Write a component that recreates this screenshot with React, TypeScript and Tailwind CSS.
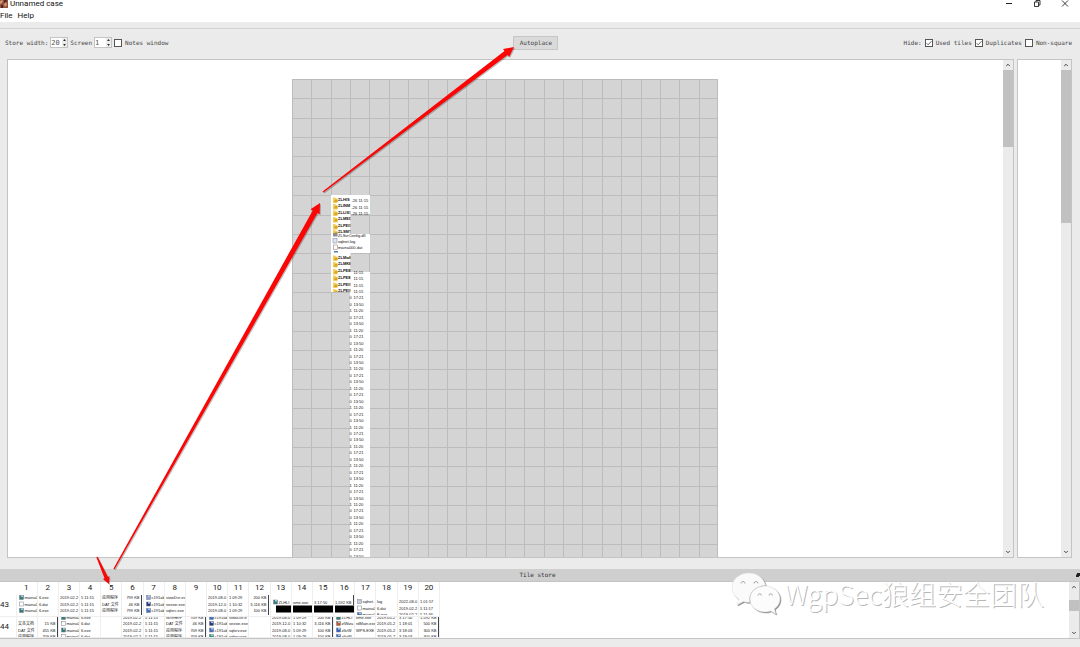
import React from "react";
import { ChevronDown, ChevronUp } from "lucide-react";

const UI_FONT = "font-['Roboto','Noto_Sans',sans-serif]";
const MONO_FONT = "font-['DejaVu_Sans_Mono','Liberation_Mono',monospace]";
const TILE_FONT = "'Liberation Sans', 'Noto Sans CJK SC', sans-serif";

function Spin({ id, value }: { id: string; value: string }) {
  return (
    <span className="flex h-[11px] w-[18px] items-stretch border border-[#c4c4c4] bg-white">
      <input
        id={id}
        type="text"
        defaultValue={value}
        className="w-0 min-w-0 flex-1 bg-transparent text-[7px] leading-none text-[#555] outline-none"
      />
      <span className="flex w-[5px] flex-col bg-[#ececec]">
        <button aria-label="Increase" className="flex flex-1 items-center justify-center">
          <svg viewBox="0 0 4 3" className="h-[2px] w-[3px]">
            <path d="M0 3 2 0 4 3Z" fill="#222" />
          </svg>
        </button>
        <button aria-label="Decrease" className="flex flex-1 items-center justify-center">
          <svg viewBox="0 0 4 3" className="h-[2px] w-[3px]">
            <path d="M0 0 2 3 4 0Z" fill="#222" />
          </svg>
        </button>
      </span>
    </span>
  );
}

function Check({ label, checked = false }: { label: string; checked?: boolean }) {
  return (
    <label className="flex items-center gap-[3px]">
      <span className="grid size-2 place-items-center">
        <input
          type="checkbox"
          defaultChecked={checked}
          className="peer col-start-1 row-start-1 size-2 appearance-none border border-[#555] bg-white"
        />
        <svg
          viewBox="0 0 8 8"
          className="pointer-events-none invisible col-start-1 row-start-1 size-2 peer-checked:visible"
        >
          <path d="M1.6 4.2 3.2 5.8 6.5 2.2" fill="none" stroke="#444" strokeWidth="0.8" />
        </svg>
      </span>
      {label}
    </label>
  );
}

function ScrollBar({ before, thumb }: { before?: string; thumb: string }) {
  return (
    <div className="flex w-[10px] shrink-0 flex-col bg-[#ebebeb]">
      <button aria-label="Scroll up" className="flex h-[10px] shrink-0 items-center justify-center">
        <ChevronUp className="size-[6px] text-[#444]" strokeWidth={4} />
      </button>
      {before && <div className={before} />}
      <div className={"bg-[#c1c1c1] " + thumb} />
      <div className="flex-1" />
      <button aria-label="Scroll down" className="flex h-[10px] shrink-0 items-center justify-center">
        <ChevronDown className="size-[6px] text-[#444]" strokeWidth={4} />
      </button>
    </div>
  );
}

const CELL = 426 / 22;
const TIMES = ["17:21", "13:50", "11:20"];
const FOLDERS: [number, string][] = [
  [120.5, "ZLHIS"],
  [127, "ZLINM"],
  [133.5, "ZLLIS1"],
  [140, "ZLMED"],
  [147, "ZLPEIS"],
  [153, "ZLSMT"],
  [178.5, "ZLMwB"],
  [185, "ZLMKB"],
  [192, "ZLPEB"],
  [198.5, "ZLPEB"],
  [205.5, "ZLPEIS"],
  [212, "ZLPEIS"],
];

function Folder({ x, y }: { x: number; y: number }) {
  return (
    <g>
      <path d={`M${x} ${y - 2}h2l1 1h1.5v4.5h-4.5Z`} fill="#f3cf5a" />
      <path d={`M${x + 2} ${y}h2.5v2.5h-3.5Z`} fill="#d9a520" />
    </g>
  );
}

function Workspace() {
  const lines = Array.from({ length: 30 }, (_, i) => i);
  const rows = Array.from({ length: 45 }, (_, i) => i);
  return (
    <svg width="426" height="560" viewBox="0 0 426 560" className="shrink-0">
      <rect width="426" height="560" fill="#d4d4d4" />
      <g stroke="#bcbcbc" strokeWidth="1">
        {lines.slice(0, 23).map((i) => (
          <line
            key={"v" + i}
            x1={Math.min(Math.round(i * CELL) + 0.5, 425.5)}
            x2={Math.min(Math.round(i * CELL) + 0.5, 425.5)}
            y1="0"
            y2="560"
          />
        ))}
        {lines.map((i) => (
          <line key={"h" + i} x1="0" x2="426" y1={Math.round(i * CELL) + 0.5} y2={Math.round(i * CELL) + 0.5} />
        ))}
      </g>
      <g fill="#fff">
        <rect x="39" y="116" width="19.5" height="97" />
        <rect x="58" y="116" width="20" height="19" />
        <rect x="58" y="155" width="20" height="19" />
        <rect x="58" y="193" width="20" height="367" />
      </g>
      <g fontFamily={TILE_FONT} fontSize="4" fill="#111">
        <svg x="39" y="116" width="19.5" height="97" viewBox="39 116 19.5 97">
          {FOLDERS.map(([y, name]) => (
            <g key={y}>
              <Folder x={41} y={y} />
              <text x="46" y={y + 1.4} fontWeight="bold">
                {name}
              </text>
            </g>
          ))}
        </svg>
        <rect x="39" y="154.500" width="19" height="3" fill="#fff" />
        <rect x="41" y="154" width="4.5" height="3.5" fill="#8b8d91" />
        <text x="46" y="157.6">ZLSvrConfig.dll</text>
        <rect x="41" y="159.5" width="4" height="4.5" fill="#dfe4ee" stroke="#8a93a8" strokeWidth="0.6" />
        <text x="46" y="163.6">sqlnet.log</text>
        <rect x="41.3" y="166" width="4" height="4.5" fill="#fff" stroke="#a88" strokeWidth="0.6" />
        <text x="46" y="170.2">maina000.dat</text>
        <rect x="42" y="172" width="4" height="1.5" fill="#4a80b8" />
        <text x="59.5" y="123">-26 11:15</text>
        <text x="59.5" y="129.8">-26 11:15</text>
        <text x="59.5" y="135.5">-26 11:15</text>
        {rows.map((i) => {
          const y = 194.6 + i * (CELL / 3);
          return (
            <g key={i}>
              {i > 3 && <text x="57.5" y={y}>{i % 3 ? "0" : "1"}</text>}
              <text x="61.5" y={y}>{i < 4 ? "11:15" : TIMES[(i - 4) % 3]}</text>
            </g>
          );
        })}
      </g>
    </svg>
  );
}

type Tile = {
  lines: string[];
  icons?: string[];
  bar?: boolean;
  right?: boolean;
  redact?: [number, number];
};

const t = (...lines: string[]): Tile => ({ lines });
const size = (...lines: string[]): Tile => ({ lines, bar: true, right: true });
const ic = (icons: string[], ...lines: string[]): Tile => ({ icons, lines });

const G = "#2f7d78";
const W = "#ffffff";
const N = "#27337a";
const B = "#3c6fc4";

const ROWS: { id: number; ys: number[]; tiles: Tile[] }[] = [
  {
    id: 43,
    ys: [4, 10.5, 17],
    tiles: [
      ic([G, W, G], "maina0", "maina0", "maina0"),
      t("6.exe", "6.dat", "6.exe"),
      t("2019-02-2", "2019-02-2", "2019-02-2"),
      t("5 11:15", "5 11:15", "5 11:15"),
      t("应用程序", "DAT 文件", "应用程序"),
      size("799 KB", "46 KB", "799 KB"),
      ic(["#8aa0d8", N, B], "c191ab", "c191ab", "c191ab"),
      t("viewDvr-ex", "sexsie.exe", "sqlsrc.exe"),
      t(),
      t("2019-08-0", "2019-12-0", "2019-08-0"),
      t("1 09:29", "1 10:32", "1 09:29"),
      size("200 KB", "3,116 KB", "100 KB"),
      { icons: ["", G], lines: ["", "ZLHLI"], redact: [5, 20] },
      { lines: ["", "ome.exe"], redact: [1, 20] },
      { lines: ["", "3 17:50"], redact: [1, 20] },
      { lines: ["", "1,592 KB"], redact: [1, 20], right: true, bar: true },
      ic(["", "#c9cfe0", W, B], "", "sqlnet.", "maina0", "maina0"),
      t("", "log", "6.dat", "E.exe"),
      t("", "2022-08-0", "2019-02-2", "2019-02-2"),
      t("", "1 01:57", "5 11:17", "5 11:36"),
    ],
  },
  {
    id: 44,
    ys: [2, 8, 14.5, 21],
    tiles: [
      t("", "文本文档", "DAT 文件", "应用程序"),
      size("", "15 KB", "455 KB", "709 KB"),
      ic([G, W, G, W], "maina0", "maina0", "maina0", "maina0"),
      t("6.exe", "6.dat", "6.exe", "6.dat"),
      t(),
      t("2019-02-2", "2019-02-2", "2019-02-2", "2019-02-2"),
      t("5 11:15", "5 11:15", "5 11:15", "5 11:15"),
      t("应用程序", "DAT 文件", "应用程序", "应用程序"),
      size("709 KB", "46 KB", "709 KB", "709 KB"),
      ic([B, N, B, "#159a62"], "c191ab", "c191ab", "c191ab", "c191ab"),
      t("viewDvr-e", "sexsie.exe", "sqlsrv.exe", "sqlsrv.exe"),
      t(),
      t("2019-08-0", "2019-12-0", "2019-08-0", "2019-08-0"),
      t("1 09:29", "1 10:32", "5 09:29", "1 09:29"),
      size("200 KB", "3,116 KB", "100 KB", "100 KB"),
      ic([G, "#c0562b", "#2b62c9", B], "ZLHLI", "zlWiza", "zlkrW", "zlkrW"),
      t("ome.exe", "rdMain.exe", "WPS.EXE", ""),
      t("2019-05-2", "2019-05-2", "2019-05-2", "2019-05-2"),
      t("3 17:50", "1 18:01", "3 18:03", "3 18:03"),
      size("1,592 KB", "500 KB", "300 KB", "300 KB"),
    ],
  },
];

function TileView({ tile, ys }: { tile: Tile; ys: number[] }) {
  const list = tile.redact ? [-9, 8.5] : tile.lines.length === 4 && ys.length === 3 ? [0, 8, 14.5, 21] : ys;
  return (
    <svg viewBox="0 0 20 20" width="20" height="20" className="block">
      <g fontFamily={TILE_FONT} fontSize="4" fill="#222">
        {tile.lines.map((line, i) => (
          <text key={i} x={tile.right ? 17.5 : tile.icons ? 7.5 : 1} y={list[i]} textAnchor={tile.right ? "end" : "start"}>
            {line}
          </text>
        ))}
      </g>
      {tile.icons?.map(
        (c, i) =>
          c && (
            <g key={i}>
              <rect x="2.5" y={list[i] - 3.5} width="4" height="4" fill={c} stroke="#777b88" strokeWidth="0.5" />
              {c !== W && <rect x="4" y={list[i] - 3.5} width="2" height="1.6" fill="#a9c4e0" />}
            </g>
          ),
      )}
      {tile.redact && (
        <rect x={tile.redact[0]} y="10.5" width={tile.redact[1] - tile.redact[0]} height="7" fill="#000" />
      )}
      {tile.bar && <rect x="19" y="0" width="1" height={tile.redact ? 10 : 20} fill="#444" />}
    </svg>
  );
}

function TileTable() {
  return (
    <table className="w-[440px] table-fixed border-collapse self-start text-[8px] leading-none text-[#222]">
      <thead>
        <tr className="h-[13px]">
          <th className="w-4 p-0" aria-label="Row" />
          {Array.from({ length: 20 }, (_, i) => (
            <th key={i} className="border-r border-[#eeeeee] p-0 pb-[2px] text-center font-normal">
              {i + 1}
            </th>
          ))}
        </tr>
      </thead>
      <tbody>
        {ROWS.map((row) => (
          <tr key={row.id} className="h-[21px]">
            <th className="border-r border-b border-[#eeeeee] p-0 text-left font-normal">{row.id}</th>
            {row.tiles.map((tile, i) => (
              <td key={i} className="overflow-hidden border-r border-b border-[#eeeeee] p-0">
                <TileView tile={tile} ys={row.ys} />
              </td>
            ))}
          </tr>
        ))}
      </tbody>
    </table>
  );
}

// Tapered arrow: thin at the tail, widening towards a triangular head.
function arrow(x1: number, y1: number, x2: number, y2: number, w: number, head: number, hw: number) {
  const len = Math.hypot(x2 - x1, y2 - y1);
  const ux = (x2 - x1) / len;
  const uy = (y2 - y1) / len;
  const bx = x2 - ux * head;
  const by = y2 - uy * head;
  const p = (x: number, y: number, d: number) => `${x - uy * d},${y + ux * d}`;
  return [p(x1, y1, 0.7), p(bx, by, w), p(bx, by, hw), `${x2},${y2}`, p(bx, by, -hw), p(bx, by, -w), p(x1, y1, -0.7)].join(" ");
}

function Annotations() {
  return (
    <svg width="1080" height="647" className="pointer-events-none absolute top-0 left-0 drop-shadow-[1px_1px_0px_rgba(0,0,0,0.25)]">
      <g fill="#fb0505">
        <polygon points={arrow(323, 192, 514, 47, 2.5, 10, 5)} />
        <polygon points={arrow(114, 569, 320, 203, 2.7, 10, 5.2)} />
        <polygon points={arrow(97, 557, 109, 584, 1.8, 7, 3.5)} />
      </g>
    </svg>
  );
}

function Watermark() {
  return (
    <div className="pointer-events-none absolute right-[36px] bottom-[31px] flex items-center gap-1">
      <svg width="50" height="44" viewBox="0 0 50 44" className="drop-shadow-[1px_1px_0px_rgba(0,0,0,0.45)]">
        <path
          d="M18 1C8.500 1 1 7.300 1 15.500c0 5 2.600 9 6.800 11.700L6 33l6.500-3.500c2 .7 4 .9 6.200.8C17 21 24 14 34.500 13.500 33 6 26.500 1 18 1Z"
          fill="#fafafa"
          stroke="#dedede"
          strokeWidth="0.5"
        />
        <path
          d="M34 14c-8.500 0-15 5.700-15 13s6.500 13 15 13c2 0 3.900-.4 5.700-1l5 3-1.400-5c3.500-2.500 5.700-6 5.700-10 0-7.300-6.500-13-15-13Z"
          fill="#fcfcfc"
          stroke="#d8d8d8"
          strokeWidth="0.5"
        />
        <g fill="none" stroke="#a9a9a9" strokeWidth="1">
          <path d="M10 11.500a2 2 0 0 1 4 0M23 11.500a2 2 0 0 1 4 0M27 23.500a1.700 1.700 0 0 1 3.400 0M38 23.500a1.700 1.700 0 0 1 3.400 0" />
        </g>
      </svg>
      <span className="font-['Noto_Sans_CJK_SC',sans-serif] text-[27px] leading-8 font-light text-white [text-shadow:1px_1px_0px_#b8b8b8]">
        WgpSec狼组安全团队
      </span>
    </div>
  );
}

export default function App() {
  return (
    <div className={`relative flex h-screen flex-col overflow-hidden bg-[#ebebeb] text-[8px] leading-none text-[#111] ${UI_FONT}`}>
      <header className="flex h-[10px] shrink-0 items-start justify-between bg-white">
        <div className="flex items-center gap-[2px]">
          <svg width="8" height="8" viewBox="0 0 8 8">
            <rect width="8" height="8" fill="#94533c" />
            <path d="M0 1 3 0 2 3 0 4ZM4 4l2-2 1 3-2 2Z" fill="#d59a76" />
            <path d="M4 0h3L6 2 4 3ZM1 5l2 0v3H1Z" fill="#4c2a22" />
          </svg>
          <h1>Unnamed case</h1>
        </div>
        <div className="flex gap-5 pr-[11px]">
          <button aria-label="Minimize">
            <svg width="8" height="8" viewBox="0 0 8 8">
              <path d="M1 3.500h6" stroke="#222" />
            </svg>
          </button>
          <button aria-label="Restore">
            <svg width="8" height="8" viewBox="0 0 8 8" fill="none" stroke="#222" strokeWidth="0.9">
              <path d="M1.500 2h4v4.500h-4ZM3 2V.5h4V5H5.500" />
            </svg>
          </button>
          <button aria-label="Close">
            <svg width="8" height="8" viewBox="0 0 8 8">
              <path d="M1 .5l6 6M7 .5l-6 6" stroke="#222" strokeWidth="0.9" />
            </svg>
          </button>
        </div>
      </header>
      <nav className="flex h-3 shrink-0 items-center gap-[5px] bg-white">
        <button>File</button>
        <button>Help</button>
      </nav>
      <div className="h-[7px] shrink-0 border-b border-[#d2d2d2]" />

      <div className={`flex h-[30px] shrink-0 items-center justify-between pr-2 pb-[3px] pl-[5px] text-[6px] text-[#444] ${MONO_FONT}`}>
        <div className="flex items-center gap-[2px]">
          <label htmlFor="store-width">Store width:</label>
          <Spin id="store-width" value="20" />
          <label htmlFor="screen">Screen</label>
          <Spin id="screen" value="1" />
          <Check label="Notes window" />
        </div>
        <button className="h-[14px] w-[45px] border border-[#c6c6c6] bg-[#dadada]">Autoplace</button>
        <div className="flex items-center justify-end gap-[3px]">
          <span>Hide:</span>
          <Check label="Used tiles" checked />
          <Check label="Duplicates" checked />
          <Check label="Non-square" />
        </div>
      </div>

      <main className="flex min-h-0 flex-1 gap-[3px] pr-2 pl-[7px]">
        <section className="flex min-w-0 flex-1 border border-[#c4c4c4] bg-white">
          <div className="flex min-w-0 flex-1 items-start justify-center overflow-hidden pt-[19px] pr-[2px]">
            <Workspace />
          </div>
          <ScrollBar thumb="h-[77px]" />
        </section>
        <aside className="flex w-[55px] shrink-0 justify-end border border-[#c4c4c4] bg-white">
          <ScrollBar thumb="h-[153px]" />
        </aside>
      </main>

      <footer className="mt-[11px] shrink-0 pb-2">
        <div className={`flex h-[13px] items-center border-b border-[#c4c4c4] bg-[#cfcfcf] text-[6px] text-[#333] ${MONO_FONT}`}>
          <h2 className="flex-1 text-center">Tile store</h2>
          <button aria-label="Float tile store">
            <svg width="5" height="5" viewBox="0 0 5 5">
              <path d="M2 0h3v3H4v1H1V1.500h1Z" fill="#222" />
            </svg>
          </button>
        </div>
        <div className="flex h-[57px] justify-between overflow-hidden border-r border-b border-[#c4c4c4] bg-white">
          <TileTable />
          <ScrollBar before="h-2" thumb="h-[11px]" />
        </div>
      </footer>

      <Watermark />
      <Annotations />
    </div>
  );
}
